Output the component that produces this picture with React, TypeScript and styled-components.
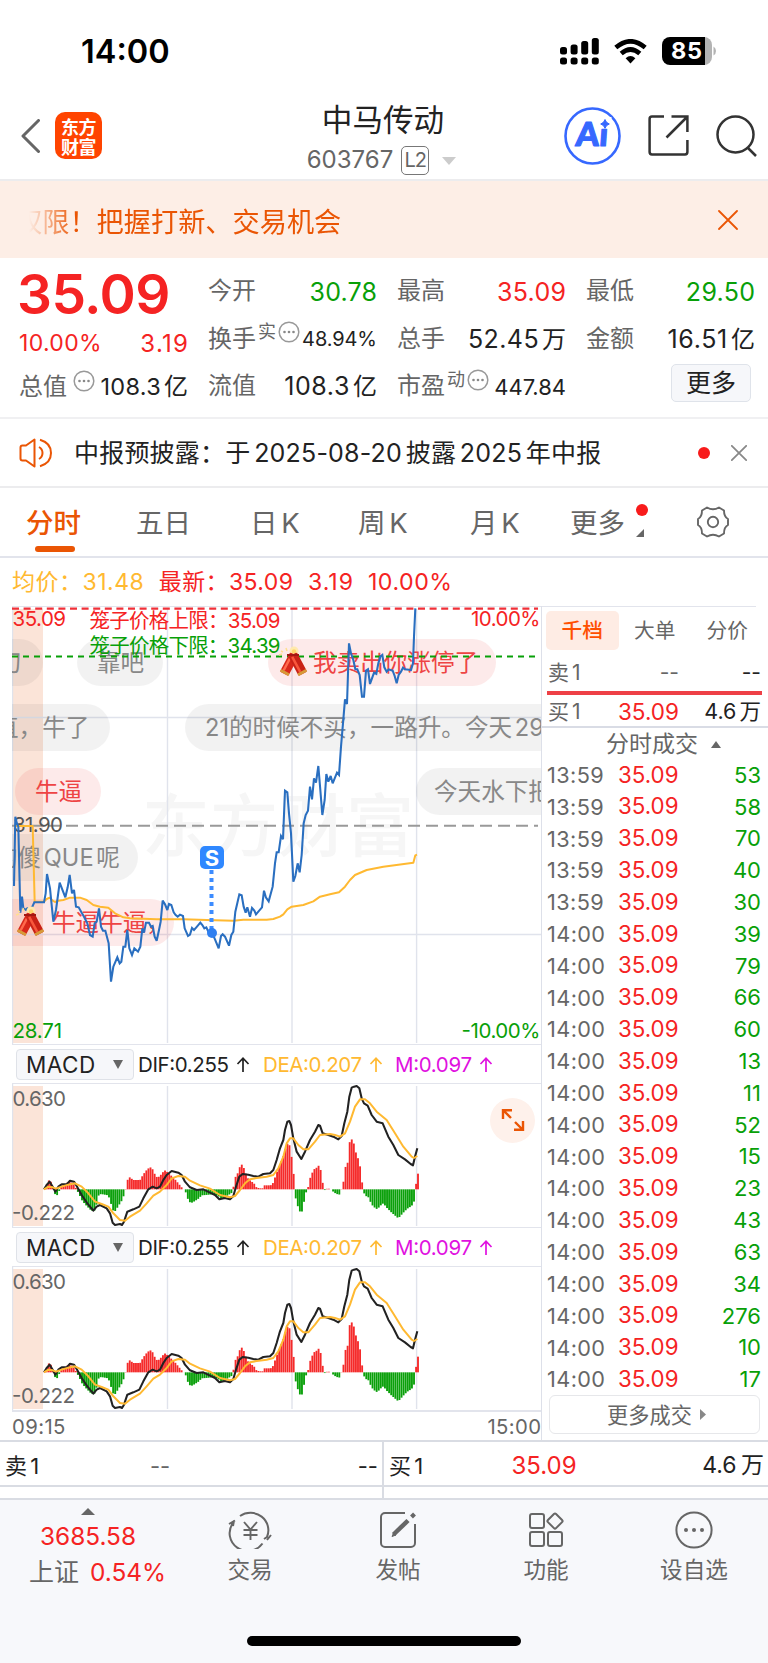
import React from 'react';
import styled, { createGlobalStyle } from 'styled-components';

const C = {
  red: '#f52323',
  green: '#08a008',
  orange: '#ea5504',
  gray: '#666',
  dark: '#222',
  line: '#e2e4ec',
  amber: '#ffb931',
  blue: '#2a6fc0',
  magenta: '#e011e0',
};
const FONT = 'Inter, "Noto Sans CJK SC", "Liberation Sans", sans-serif';

const Global = createGlobalStyle`
  * { box-sizing: border-box; }
  body { margin: 0; background: #fff; font-family: ${FONT}; color: ${C.dark}; }
  svg { display: block; flex: none; }
`;

const Screen = styled.div`
  width: 768px; height: 1663px; overflow: hidden; display: flex; flex-direction: column; background: #fff;
`;

/* run of text: size, colour, weight, tracking, word spacing */
const T = styled.span<{ $s?: number; $c?: string; $w?: number; $ls?: number; $ws?: number }>`
  font-size: ${p => p.$s ?? 25}px;
  color: ${p => p.$c ?? C.dark};
  font-weight: ${p => p.$w ?? 400};
  letter-spacing: ${p => p.$ls ?? 0}px;
  margin-right: ${p => -(p.$ls ?? 0)}px;
  word-spacing: ${p => p.$ws ?? 0}px;
  line-height: 1.2;
  white-space: pre;
`;
const Unit = styled.span`margin-left: 3px; font-size: 24px;`;

/* ---------- status bar ---------- */
const StatusBar = styled.header`
  height: 88px; flex: none; padding: 14px 52px 0 81px; display: flex; align-items: center; justify-content: space-between;
`;
const StatusIcons = styled.div`display: flex; align-items: center; gap: 15px;`;

/* ---------- title bar ---------- */
const NavBar = styled.nav`
  height: 93px; flex: none; border-bottom: 2px solid #ececee; display: grid; grid-template-columns: 200px 1fr 200px; align-items: center;
`;
const NavLeft = styled.div`display: flex; align-items: center; gap: 15px; padding: 4px 0 0 20px; height: 100%;`;
const Logo = styled.div`
  width: 47px; height: 47px; border-radius: 10px; background: #ff4400; color: #fff; display: flex; flex-direction: column;
  align-items: center; justify-content: center; font: 700 18px/20px "Noto Sans CJK SC", sans-serif; letter-spacing: -0.5px;
`;
const NavTitle = styled.div`display: flex; flex-direction: column; align-items: center; padding: 10px 2px 0 0;`;
const CodeLine = styled.div`display: flex; align-items: center; gap: 8px; margin-top: 8px;`;
const LevelTag = styled.span`
  width: 28px; height: 29px; border: 1.5px solid #777; border-radius: 5px; font-size: 20px; line-height: 27px; text-align: center;
  color: #666; letter-spacing: -1px;
`;
const NavRight = styled.div`display: flex; align-items: center; justify-content: flex-end; gap: 27px; padding: 4px 11px 0 0;`;

/* ---------- orange banner ---------- */
const Banner = styled.div`
  height: 77px; flex: none; background: #fdeee6; display: flex; align-items: center; padding: 0 30px 0 29px; justify-content: space-between;
`;
const BannerText = styled.div`
  height: 40px; display: flex; align-items: center; overflow: hidden; color: ${C.orange}; font-size: 27.2px; white-space: pre;
  span:first-child { margin-left: -14px; }
  mask-image: linear-gradient(90deg, transparent 0, #000 46px);
`;

/* ---------- quote ---------- */
const Quote = styled.section`
  height: 161px; flex: none; border-bottom: 2px solid #f0f0f2; padding: 10px 13px 0 19px; display: grid;
  grid-template-columns: repeat(4, 1fr); column-gap: 20px;
`;
const QCol = styled.div`display: flex; flex-direction: column;`;
const QRow = styled.div<{ $h?: number; $shift?: number }>`
  height: ${p => p.$h ?? 47.5}px; margin-left: ${p => p.$shift ?? 0}px; display: flex; align-items: center; justify-content: space-between;
`;
const QLabel = styled.span`
  display: flex; align-items: center; font-size: 24px; color: ${C.gray}; line-height: 1.2; white-space: nowrap; gap: 2px;
`;
const Sup = styled.span`font-size: 18px; line-height: 20px; margin-bottom: 14px;`;
const MoreBtn = styled.button`
  width: 80px; height: 38px; margin: 1px 4px 0 auto; border: 1.5px solid #dfe3ea; border-radius: 5px; background: #f6f7fa; padding: 0;
  font: 400 25px/33px ${FONT}; color: ${C.dark};
`;

/* ---------- news ---------- */
const News = styled.section`
  height: 69px; flex: none; border-bottom: 2px solid #ececee; display: flex; align-items: center; padding: 0 21px 0 19px;
`;
const NewsText = styled.div`flex: 1; margin-left: 21px; display: flex;`;
const Dot = styled.i<{ $r: number; $mr?: number }>`
  width: ${p => p.$r * 2}px; height: ${p => p.$r * 2}px; border-radius: 50%; background: #f81b1b; display: block; flex: none;
  margin-right: ${p => p.$mr ?? 0}px;
`;

/* ---------- tabs ---------- */
const Tabs = styled.nav`
  height: 70px; flex: none; border-bottom: 2px solid ${C.line}; display: grid; align-items: center; padding: 0 0 0 26px;
  grid-template-columns: 110px 114px 108px 112px 100px 127px 1fr;
`;
const Tab = styled.div<{ $on?: boolean }>`
  position: relative; height: 68px; display: flex; align-items: center; font-size: 27.5px; padding-bottom: 2px; white-space: pre;
  word-spacing: -4px; color: ${p => (p.$on ? C.orange : C.gray)}; font-weight: ${p => (p.$on ? 500 : 400)};
  &::after {
    content: ''; display: ${p => (p.$on ? 'block' : 'none')}; position: absolute; left: 9px; bottom: 4px; width: 40px; height: 6px;
    border-radius: 3px; background: ${C.orange};
  }
`;
const TabMark = styled.div`
  position: absolute; left: 66px; top: 16px; height: 33px; display: flex; flex-direction: column; justify-content: space-between;
`;

const Legend = styled.div`height: 48px; flex: none; padding: 2px 12px 0; display: flex; align-items: center; gap: 15px;`;

/* ---------- main area ---------- */
const Main = styled.main`height: 836px; flex: none; display: flex; border-bottom: 2px solid #d9dce3;`;
const Charts = styled.div`flex: none; width: 542px; padding-left: 12px; border-right: 1px solid #dde0e9; display: flex; flex-direction: column;`;
const PriceChart = styled.div`height: 438px; flex: none; position: relative; overflow: hidden; border-top: 1px solid ${C.line};`;
const Layer = styled.svg`position: absolute; left: 0; top: 0;`;
const Bubble = styled.div<{ $x: number; $y: number; $w: number; $red?: boolean; $pad: number }>`
  position: absolute; left: ${p => p.$x - 12}px; top: ${p => p.$y - 607}px; width: ${p => p.$w}px; height: 47px; border-radius: 24px;
  background: ${p => (p.$red ? 'rgba(240,50,50,.1)' : 'rgba(0,0,0,.05)')}; color: ${p => (p.$red ? '#ee4444' : '#888')};
  font-size: 23.6px; line-height: 47px; padding-left: ${p => p.$pad}px; white-space: nowrap; word-spacing: -4px;
`;
const IndicatorBar = styled.div<{ $h: number }>`
  height: ${p => p.$h}px; flex: none; border-top: 1.5px solid ${C.line}; border-bottom: 1.5px solid ${C.line};
  display: flex; align-items: center; padding: 1px 0 0 4px;
`;
const Picker = styled.button`
  width: 118px; height: 31px; border: 1.5px solid #dfe2e8; border-radius: 4px; background: #f6f7fa; padding: 0 10px 0 9px; margin-right: 4px;
  display: flex; align-items: center; justify-content: space-between; font: 400 22.5px/28px ${FONT}; letter-spacing: 0.5px; color: ${C.dark};
`;
const MacdBox = styled.div<{ $h: number }>`height: ${p => p.$h}px; flex: none; position: relative; overflow: hidden;`;
const Expand = styled.div`
  position: absolute; left: 478px; top: 13.5px; width: 45px; height: 45px; border-radius: 50%; background: #fef1eb;
  display: flex; align-items: center; justify-content: center;
`;
const TimeAxis = styled.div`
  flex: 1; border-top: 2px solid ${C.line}; display: flex; justify-content: space-between; align-items: center; padding-top: 2px;
`;

/* ---------- order panel ---------- */
const Side = styled.aside`width: 226px; flex: none; display: flex; flex-direction: column;`;
const SideTabs = styled.div`height: 48px; border-top: 1px solid ${C.line}; margin-right: 12px; display: flex; padding: 4px 0 0 4px; flex: none;`;
const SideTab = styled.div<{ $on?: boolean }>`
  width: 72.5px; height: 39px; border-radius: 5px; font-size: 20.7px; line-height: 39px; text-align: center; flex: none;
  color: ${p => (p.$on ? '#ff5000' : C.gray)}; background: ${p => (p.$on ? '#feece4' : 'transparent')}; font-weight: ${p => (p.$on ? 500 : 400)};
`;
const Level = styled.div<{ $h: number; $pt?: number }>`
  height: ${p => p.$h}px; flex: none; display: grid; grid-template-columns: 50px 81px 1fr; align-items: center; padding: ${p => p.$pt ?? 0}px 7px 0 6px;
  > :nth-child(2), > :nth-child(3) { text-align: right; }
`;
const RedBar = styled.div`height: 4px; margin: 0 6px 0 5px; background: #ee4046; flex: none;`;
const DealTitle = styled.div`
  height: 33px; flex: none; border-top: 2px solid #d9dce5; display: flex; align-items: center; justify-content: center; gap: 13px; padding: 2px 0 0 17px;
`;
const Deals = styled.div`display: flex; flex-direction: column; flex: none;`;
const Deal = styled.div`
  height: 31.82px; display: grid; grid-template-columns: 71px 80px 1fr; align-items: center; padding: 0 7px 0 5px;
  > :last-child { text-align: right; }
`;
const MoreDeals = styled.button`
  height: 39px; margin: 0 8px 0 7px; border: 1.5px solid #e6e7ea; border-radius: 6px; background: #fff; display: flex; align-items: center;
  justify-content: center; gap: 8px; font: 400 21.2px/34px ${FONT}; color: ${C.gray}; padding: 0 0 0 4px; flex: none;
`;

/* ---------- bottom quote strip ---------- */
const Strip = styled.div`height: 58px; flex: none; display: grid; grid-template-columns: 384px 384px; border-bottom: 2px solid #d9dce3;`;
const StripHalf = styled.div`
  border-right: 2px solid #d9dce3; &:last-child { border-right: 0; }
`;
const StripRow = styled.div`
  height: 45px; border-bottom: 2px solid #d9dce3; display: grid; grid-template-columns: 90px 130px 1fr; align-items: center; padding: 5px 4px 0 5px;
  > :nth-child(2) { text-align: center; }
  > :nth-child(3) { text-align: right; }
`;

const TabBar = styled.footer`flex: 1; background: #f7f8fb; display: flex; flex-direction: column;`;
const TabItems = styled.div`height: 136px; display: grid; grid-template-columns: 176px repeat(4, 148px);`;
const TabItem = styled.div`
  display: flex; flex-direction: column; align-items: center; padding-top: 11px; gap: 7px; font-size: 22.6px; line-height: 28px; color: #666;
`;
const IndexItem = styled.div`display: flex; flex-direction: column; align-items: center; padding-top: 8px; gap: 6.5px;`;
const IndexLine = styled.div`display: flex; align-items: center; gap: 11px; padding-left: 19px;`;
const HomeBar = styled.div`width: 274px; height: 10px; border-radius: 5px; background: #000; margin: 0 auto;`;

const More = () => (
  <svg width="22" height="22" viewBox="0 0 22 22">
    <circle cx="11" cy="11" r="9.8" fill="none" stroke="#999" strokeWidth="1.5" />
    {[6.5, 11, 15.5].map(x => <circle key={x} cx={x} cy="11" r="1.3" fill="#888" />)}
  </svg>
);
const Close = ({ s, c, w = 1.8 }: { s: number; c: string; w?: number }) => (
  <svg width={s} height={s} viewBox="0 0 20 20"><path d="M1 1L19 19M19 1L1 19" stroke={c} strokeWidth={w} strokeLinecap="round" /></svg>
);

/* Chart data is kept in thirds of a pixel. */
const PRICE = '42,858 46,650 50,668 55,680 61,938 66,890 70,925 78,930 82,925 88,928 97,920 103,907 132,907 137,880 141,822 150,865 160,965 168,930 179,848 196,892 203,862 209,825 216,880 222,870 228,920 236,922 246,940 252,950 262,970 270,1005 278,1010 284,970 290,965 297,925 303,980 309,992 316,992 326,1030 333,1145 340,1100 352,1072 359,1090 364,1085 370,1040 376,1040 382,990 388,1045 396,1065 403,1045 414,1055 421,1040 427,985 432,998 438,968 447,968 453,980 458,978 464,1010 470,1022 477,990 482,965 488,902 495,913 502,930 507,912 514,915 521,937 527,945 533,950 540,944 549,948 554,985 564,1008 570,1004 576,984 582,990 589,982 601,968 607,975 613,985 619,982 625,995 637,1000 645,1018 656,1045 663,1008 668,1003 675,1010 687,1037 694,1005 700,995 706,935 718,883 725,886 731,920 737,938 742,922 750,950 756,924 763,932 768,943 775,935 786,922 792,872 798,893 806,904 818,860 825,790 830,757 836,757 843,708 849,718 855,572 862,577 867,640 873,700 880,845 886,828 893,790 899,817 905,765 911,670 917,645 924,632 930,560 936,598 942,535 948,548 955,498 961,570 967,645 974,600 979,522 985,545 992,528 998,550 1011,518 1017,525 1023,440 1029,370 1035,298 1041,312 1047,130 1053,160 1060,180 1066,208 1072,208 1079,225 1086,290 1092,290 1098,212 1104,208 1110,252 1116,235 1122,218 1129,222 1135,190 1141,170 1147,165 1153,202 1160,215 1166,208 1172,210 1178,212 1184,228 1190,250 1196,225 1203,215 1209,203 1215,208 1227,209 1233,210 1239,190 1242,110 1246,25';
const AVG = '46,678 98,678 104,905 132,905 140,897 149,893 158,902 165,906 175,902 190,900 210,893 240,893 260,900 280,915 300,920 325,923 345,940 370,952 390,955 470,958 550,958 620,960 700,962 730,959 800,959 820,957 840,950 850,943 862,928 875,920 910,915 940,904 960,890 990,883 1017,877 1035,860 1050,840 1065,825 1100,810 1150,800 1240,788 1246,766 1251,764';
const DIF = '132,448 140,435 149,425 158,440 166,455 175,440 185,433 200,433 210,422 222,425 230,438 245,465 262,490 280,512 290,500 300,495 320,505 330,520 338,548 345,555 360,552 366,555 372,545 382,515 400,508 418,500 430,475 445,448 458,440 470,445 480,440 490,420 500,405 515,393 535,398 545,405 555,425 570,442 590,450 610,448 630,458 645,465 658,478 675,474 690,478 700,468 708,440 718,410 728,402 745,404 760,408 775,410 790,402 810,400 820,390 830,360 840,325 850,300 855,270 862,245 868,243 873,255 880,295 890,335 904,357 915,335 930,300 945,275 955,255 960,257 968,280 985,285 1000,290 1015,298 1025,288 1033,250 1042,215 1048,170 1055,143 1062,140 1070,138 1078,145 1085,175 1092,190 1103,197 1115,225 1130,245 1148,250 1165,290 1180,315 1195,345 1215,358 1232,372 1239,376 1245,350 1252,325';
const DEA = '132,448 145,440 158,442 168,446 185,440 205,434 225,430 245,440 265,460 285,485 305,492 325,500 340,520 360,540 375,542 390,530 420,512 440,490 460,467 480,455 500,435 515,415 535,408 555,410 570,422 600,436 630,446 660,465 690,472 705,468 720,450 735,430 750,418 770,414 800,410 820,405 835,385 850,350 860,310 870,295 880,295 895,315 910,328 925,328 945,305 960,285 990,282 1005,285 1020,290 1035,280 1050,245 1065,200 1080,178 1095,178 1110,190 1130,215 1160,240 1185,280 1210,320 1235,350 1242,354 1252,348';
const HIST: number[][] = [[132, 0], [137, 5], [143, 22], [149, 30], [155, 18], [160, 0], [163, -10], [169, -22], [175, -10], [181, 2], [185, 12], [197, 14], [205, 24], [210, 24], [220, 16], [226, 8], [229, 0], [235, -10], [247, -35], [260, -50], [275, -65], [283, -65], [290, -45], [296, -18], [303, -14], [325, -18], [332, -40], [340, -65], [346, -65], [355, -50], [368, -30], [375, -5], [378, 5], [385, 38], [391, 35], [400, 28], [420, 28], [430, 45], [440, 58], [450, 67], [458, 60], [466, 42], [472, 35], [480, 40], [487, 50], [497, 58], [503, 50], [515, 40], [525, 30], [535, 18], [545, 6], [551, 0], [556, -5], [564, -30], [572, -42], [585, -35], [597, -27], [605, -18], [640, -15], [655, -20], [665, -28], [680, -20], [694, -12], [700, 5], [705, 35], [712, 45], [718, 65], [727, 76], [735, 55], [742, 35], [750, 27], [762, 18], [770, 5], [787, 2], [793, 12], [812, 12], [820, 20], [828, 45], [836, 65], [850, 100], [860, 135], [867, 140], [873, 110], [880, 60], [884, 5], [888, -35], [895, -55], [902, -72], [907, -65], [912, -38], [918, -10], [925, 8], [932, 40], [942, 60], [950, 65], [957, 72], [963, 55], [968, 20], [972, 5], [975, -4], [983, 4], [990, 0], [996, 0], [1000, -8], [1010, -14], [1020, -16], [1024, 0], [1031, 25], [1037, 70], [1043, 80], [1048, 140], [1055, 150], [1060, 145], [1066, 115], [1072, 100], [1078, 80], [1083, 55], [1087, 15], [1091, -10], [1100, -22], [1108, -25], [1112, -40], [1120, -52], [1132, -60], [1140, -50], [1150, -42], [1160, -55], [1175, -70], [1195, -87], [1210, -70], [1222, -58], [1235, -50], [1243, -35], [1248, 15], [1254, 47]];

const bars: { x: number; v: number }[] = [];
for (let n = 0; n <= 180; n++) {
  const x = Math.min(134 + n * 6.225, 1254);
  const i = Math.max(1, HIST.findIndex(p => p[0] >= x));
  const a = HIST[i - 1];
  const b = HIST[i];
  bars.push({ x, v: a[1] + ((b[1] - a[1]) * (x - a[0])) / (b[0] - a[0]) });
}

const Firecracker = ({ x, y }: { x: number; y: number }) => (
  <g transform={`translate(${x} ${y})`}>
    <path d="M4 4l2 1M9 1l1 3M2 8l3-1" stroke="#ffdf90" strokeWidth="1.5" />
    <circle cx="17" cy="4" r="4.5" fill="#ffe9ae" />
    <circle cx="17" cy="4.5" r="2.2" fill="#ffd66a" />
    <g transform="rotate(28 12 17)">
      <rect x="7.5" y="6" width="9.5" height="22" rx="1.5" fill="#d8281b" />
      <rect x="9" y="8" width="2.5" height="17" fill="#ff6a4d" />
      <rect x="7.5" y="25" width="9.5" height="3" fill="#d79a38" />
    </g>
    <g transform="rotate(-28 21 17)">
      <rect x="16" y="6" width="9.5" height="22" rx="1.5" fill="#c92216" />
      <rect x="18" y="8" width="2.5" height="17" fill="#f8573c" />
      <rect x="16" y="25" width="9.5" height="3" fill="#d79a38" />
    </g>
    <path d="M10 8l12 0" stroke="#a31812" strokeWidth="2" />
  </g>
);

const Label = ({ x, y, c, w, s = 20.5, children }: { x: number; y: number; c: string; w?: number; s?: number; children: string }) => (
  <text x={x} y={y} fill={c} fontSize={s} textLength={w} lengthAdjust="spacing" fontFamily={FONT}>{children}</text>
);

const Price = () => (
  <PriceChart>
    <Layer width="529" height="438" viewBox="12 607 529 438">
      <rect x="12" y="609" width="31" height="434" fill="#fbe4d8" />
      <text x="142" y="851" fontSize="68" fontWeight="500" fill="#f6f6f6" textLength="272" fontFamily='"Noto Sans CJK SC",sans-serif'>东方财富</text>
      <path d="M12.5 607V1044M167.5 609V1043M292 609V1043M416.6 609V1043M12 717.5H541M12 934.5H541" stroke="#e0e3ec" strokeWidth="1.4" fill="none" />
    </Layer>
    <Bubble $x={-40} $y={638.5} $w={83} $pad={38}>刀</Bubble>
    <Bubble $x={77} $y={638.5} $w={86} $pad={20}>靠吧</Bubble>
    <Bubble $x={268} $y={638.5} $w={228} $pad={45} $red>我卖出你涨停了</Bubble>
    <Bubble $x={-60} $y={703.5} $w={170} $pad={55}>直，牛了</Bubble>
    <Bubble $x={185} $y={703.5} $w={420} $pad={20}>21的时候不买，一路升。今天 29</Bubble>
    <Bubble $x={15} $y={768} $w={86} $pad={20} $red>牛逼</Bubble>
    <Bubble $x={416} $y={768} $w={200} $pad={18}>今天水下把</Bubble>
    <Bubble $x={-40} $y={833.5} $w={178} $pad={34}>的傻 QUE 呢</Bubble>
    <Bubble $x={-10} $y={898.5} $w={184} $pad={62} $red>牛逼牛逼，</Bubble>
    <Layer width="529" height="438" viewBox="12 607 529 438">
      <path d="M12 608.6H538" stroke="#f03038" strokeWidth="2.2" strokeDasharray="7 4.6" />
      <path d="M12 656.5H538" stroke="#08a008" strokeWidth="1.8" strokeDasharray="6 5" />
      <path d="M12 825.8H538" stroke="#999" strokeWidth="2" strokeDasharray="12 6" />
      <Label x={13} y={832} c="#555" w={50}>31.90</Label>
      <g transform="translate(0 600) scale(.33333)" fill="none" strokeLinejoin="round">
        <polyline points={AVG} stroke={C.amber} strokeWidth="6" />
        <polyline points={PRICE} stroke={C.blue} strokeWidth="6.2" strokeLinejoin="miter" strokeMiterlimit="3" />
      </g>
      <Label x={12.5} y={626} c={C.red} w={53.5}>35.09</Label>
      <Label x={89.5} y={628} c={C.red} w={191}>笼子价格上限：35.09</Label>
      <Label x={89.5} y={652.5} c={C.green} w={191}>笼子价格下限：34.39</Label>
      <Label x={471} y={626} c={C.red} w={69.5}>10.00%</Label>
      <Label x={12.5} y={1038} c={C.green} w={49.5}>28.71</Label>
      <Label x={461.5} y={1038} c={C.green} w={79}>-10.00%</Label>
      <Firecracker x={277} y={647} />
      <Firecracker x={14} y={907} />
      <path d="M211.5 870V932" stroke="#3c8cff" strokeWidth="4" strokeDasharray="4 4" />
      <circle cx="212" cy="933" r="5" fill="#2f7ff0" />
      <rect x="200" y="846" width="24" height="23" rx="5" fill="#2f88ff" />
      <text x="212" y="865.5" fontSize="22" fontWeight="700" fill="#fff" textAnchor="middle" fontFamily={FONT}>S</text>
    </Layer>
  </PriceChart>
);

const Macd = ({ h, expand }: { h: number; expand?: boolean }) => (
  <MacdBox $h={h}>
    <Layer width="529" height={h} viewBox={`12 1084 529 ${h}`}>
      <rect x="12" y="1086" width="31" height="140" fill="#fbe4d8" />
      <path d="M12.5 1084V1227M167.5 1086V1226M292 1086V1226M416.6 1086V1226" stroke="#e0e3ec" strokeWidth="1.4" />
      <g transform="translate(0 1040) scale(.33333)" fill="none" strokeLinejoin="round">
        {bars.map((b, i) => (
          <rect key={i} x={b.x - 2.8} y={b.v > 0 ? 448 - b.v : 448} width="5.6" height={Math.abs(b.v)} fill={b.v > 0 ? '#f52a2a' : '#0aa00a'} />
        ))}
        <polyline points={DIF} stroke="#222" strokeWidth="6.2" />
        <polyline points={DEA} stroke={C.amber} strokeWidth="6" />
      </g>
      <Label x={12.5} y={1105.5} c={C.gray} w={53.5}>0.630</Label>
      <Label x={12} y={1219.5} c={C.gray} w={63}>-0.222</Label>
    </Layer>
    {expand && (
      <Expand>
        <svg width="24" height="24" viewBox="0 0 24 24" fill="none" stroke={C.orange} strokeWidth="2.4">
          <path d="M2 11V2.2H11M2.5 2.5L10 10M14 14L21.5 21.5M22 13V21.8H13" />
        </svg>
      </Expand>
    )}
  </MacdBox>
);

const Indicator = ({ h }: { h: number }) => (
  <IndicatorBar $h={h}>
    <Picker>MACD<svg width="10" height="9" viewBox="0 0 10 9"><path d="M0 0H10L5 9Z" fill="#666" /></svg></Picker>
    <svg width="370" height="30" viewBox="0 0 370 30">
      <Label x={0} y={22} c={C.dark} w={91}>DIF:0.255</Label>
      <Label x={125} y={22} c={C.amber} w={99}>DEA:0.207</Label>
      <Label x={257} y={22} c={C.magenta} w={77}>M:0.097</Label>
      {([[105, C.dark], [238, C.amber], [348, C.magenta]] as [number, string][]).map(([x, c]) => (
        <path key={x} d={`M${x} 22V8.5M${x - 5.5} 14L${x} 8.2L${x + 5.5} 14`} stroke={c} strokeWidth="1.7" fill="none" />
      ))}
    </svg>
  </IndicatorBar>
);

const deals: [string, string][] = [
  ['13:59', '53'], ['13:59', '58'], ['13:59', '70'], ['13:59', '40'], ['13:59', '30'], ['14:00', '39'], ['14:00', '79'],
  ['14:00', '66'], ['14:00', '60'], ['14:00', '13'], ['14:00', '11'], ['14:00', '52'], ['14:00', '15'], ['14:00', '23'],
  ['14:00', '43'], ['14:00', '63'], ['14:00', '34'], ['14:00', '276'], ['14:00', '10'], ['14:00', '17'],
];

export default function App() {
  return (
    <Screen>
      <Global />
      <StatusBar>
        <T $s={32.5} $w={600} $c="#000">14:00</T>
        <StatusIcons>
          <svg width="39" height="27" viewBox="0 0 39 27">
            {[0, 1, 2, 3].map(i => (
              <g key={i}>
                <rect x={i * 10.6} y={[9, 6.5, 3, 0][i]} width="7" height={[7.5, 10, 13.5, 16.5][i]} rx="2.5" />
                <rect x={i * 10.6} y="19.5" width="7" height="7" rx="2.5" />
              </g>
            ))}
          </svg>
          <svg width="33" height="25" viewBox="0 0 33 25" fill="none" stroke="#000" strokeWidth="4.6">
            <path d="M1.8 8.6Q16.5 -4 31.2 8.6M7.2 14.6Q16.5 6.4 25.8 14.6" />
            <path d="M11.6 19.2Q16.5 14.8 21.4 19.2L16.5 24.5Z" fill="#000" stroke="none" />
          </svg>
          <svg width="54" height="28" viewBox="0 0 54 28">
            <path d="M41 0h1a8 8 0 0 1 8 8v12a8 8 0 0 1-8 8h-1Z" fill="#b3b3b3" />
            <path d="M8 0H43V28H8a8 8 0 0 1-8-8V8a8 8 0 0 1 8-8Z" />
            <path d="M51.5 9.5q2.5 1.5 2.5 4.5t-2.5 4.5Z" fill="#b3b3b3" />
            <text x="24.5" y="22.3" fontSize="23.5" fontWeight="700" fill="#fff" textAnchor="middle" fontFamily={FONT} textLength="31">85</text>
          </svg>
        </StatusIcons>
      </StatusBar>

      <NavBar>
        <NavLeft>
          <svg width="20" height="34" viewBox="0 0 20 34"><path d="M18.5 1.5L3 17L18.5 32.5" fill="none" stroke="#666" strokeWidth="3" strokeLinecap="round" strokeLinejoin="round" /></svg>
          <Logo><span>东方</span><span>财富</span></Logo>
        </NavLeft>
        <NavTitle>
          <T $s={30.6}>中马传动</T>
          <CodeLine>
            <T $s={24} $c="#666">603767</T>
            <LevelTag>L2</LevelTag>
            <svg width="22" height="8" viewBox="-5 0 22 8"><path d="M0 0H14L7 8Z" fill="#ccc" /></svg>
          </CodeLine>
        </NavTitle>
        <NavRight>
          <svg width="57" height="58" viewBox="0 0 57 58">
            <ellipse cx="28.5" cy="29" rx="27" ry="27.5" fill="none" stroke="#3668ff" strokeWidth="2.6" />
            <g transform="skewX(-4) translate(3 0)" fontSize="33" fontWeight="900" fill="#3668ff" stroke="#3668ff" strokeWidth="1.2" strokeLinejoin="round" fontFamily="Lato, Inter, sans-serif">
              <text x="11" y="39.5" textLength="32">Ai</text>
            </g>
            <rect x="33.5" y="10" width="14" height="11.5" fill="#fff" />
            <path d="M41 12.5Q42 16 45.3 17Q42 18 41 21.3Q40 18 36.7 17Q40 16 41 12.5Z" fill="#3668ff" stroke="#3668ff" strokeWidth="1" />
          </svg>
          <svg width="41" height="41" viewBox="0 0 41 41" fill="none" stroke="#333" strokeWidth="2.5">
            <path d="M16 1.6H4a2.4 2.4 0 0 0-2.4 2.4V37a2.4 2.4 0 0 0 2.4 2.4H37a2.4 2.4 0 0 0 2.4-2.4V25M23.5 1.6H39.4V17M39 2L18.5 22.5" />
          </svg>
          <svg width="41" height="42" viewBox="0 0 41 42" fill="none" stroke="#333" strokeWidth="2.5">
            <circle cx="19.5" cy="19.5" r="18" /><path d="M32 33L40 41" />
          </svg>
        </NavRight>
      </NavBar>

      <Banner>
        <BannerText><span>权</span>限！把握打新、交易机会</BannerText>
        <Close s={20} c={C.orange} />
      </Banner>

      <Quote>
        <QCol>
          <QRow $h={51} $shift={-2}><T $s={55} $c={C.red} $w={600} $ls={-0.6}>35.09</T></QRow>
          <QRow $h={50}><T $s={23} $c={C.red} $ls={0.35}>10.00%</T><T $s={24} $c={C.red} $ls={1.3}>3.19</T></QRow>
          <QRow $h={37}><QLabel>总值</QLabel><Sup><More /></Sup><T $s={23.5} $ls={0.3}>108.3<Unit>亿</Unit></T></QRow>
        </QCol>
        <QCol>
          <QRow><QLabel>今开</QLabel><T $c={C.green} $ls={0.2}>30.78</T></QRow>
          <QRow><QLabel>换手<Sup>实</Sup><Sup><More /></Sup></QLabel><T $s={20} $ls={-0.1}>48.94%</T></QRow>
          <QRow><QLabel>流值</QLabel><T $ls={0.6}>108.3<Unit>亿</Unit></T></QRow>
        </QCol>
        <QCol>
          <QRow><QLabel>最高</QLabel><T $c={C.red} $ls={0.3}>35.09</T></QRow>
          <QRow><QLabel>总手</QLabel><T $ls={0.4}>52.45<Unit>万</Unit></T></QRow>
          <QRow><QLabel>市盈<Sup>动</Sup><Sup><More /></Sup></QLabel><T $s={22}>447.84</T></QRow>
        </QCol>
        <QCol>
          <QRow><QLabel>最低</QLabel><T $c={C.green} $ls={0.3}>29.50</T></QRow>
          <QRow><QLabel>金额</QLabel><T $ls={0.7}>16.51<Unit>亿</Unit></T></QRow>
          <MoreBtn>更多</MoreBtn>
        </QCol>
      </Quote>

      <News>
        <svg width="34" height="30" viewBox="0 0 34 30" fill="none" stroke={C.orange} strokeWidth="2" strokeLinejoin="round">
          <path d="M1.5 9.5Q1.5 7.5 3.5 7.5H7L15.5 1.5V28.5L7 22.5H3.5Q1.5 22.5 1.5 20.5Z" />
          <path d="M20 9Q23.5 11 23.5 15Q23.5 19 20 21M21 1.8Q32 5 32 15Q32 25 21 28.2" />
        </svg>
        <NewsText><T $s={25} $ls={0.2} $ws={-3.5}>中报预披露：于 2025-08-20 披露 2025 年中报</T></NewsText>
        <Dot $r={6} $mr={21} />
        <Close s={16} c="#888" w={2.2} />
      </News>

      <Tabs>
        <Tab $on>分时</Tab><Tab>五日</Tab><Tab>日 K</Tab><Tab>周 K</Tab><Tab>月 K</Tab>
        <Tab>更多<TabMark><Dot $r={6} /><svg width="8" height="8"><path d="M8 0V8H0Z" fill="#666" /></svg></TabMark></Tab>
        <svg width="32" height="32" viewBox="0 0 32 32" fill="none" stroke="#666" strokeWidth="1.9" strokeLinejoin="round">
          <path d="M10 1.5Q16 5 22 1.5L27 4.5Q27 11 31 13V19Q27 21 27 27.5L22 30.5Q16 27 10 30.5L5 27.5Q5 21 1 19V13Q5 11 5 4.5Z" />
          <circle cx="16" cy="16" r="5.2" />
        </svg>
      </Tabs>

      <Legend>
        <T $s={23} $c={C.amber} $ls={0.5}>均价：31.48</T>
        <T $s={23} $c={C.red} $ls={0.4}>最新：35.09</T>
        <T $s={23} $c={C.red} $ls={1}>3.19</T>
        <T $s={23.2} $c={C.red} $ls={0.5}>10.00%</T>
      </Legend>

      <Main>
        <Charts>
          <Price />
          <Indicator h={40} />
          <Macd h={143} expand />
          <Indicator h={40} />
          <Macd h={143} />
          <TimeAxis><T $s={20.3} $c={C.gray} $ls={0.4}>09:15</T><T $s={20.3} $c={C.gray} $ls={0.4}>15:00</T></TimeAxis>
        </Charts>
        <Side>
          <SideTabs><SideTab $on>千档</SideTab><SideTab>大单</SideTab><SideTab>分价</SideTab></SideTabs>
          <Level $h={37}><T $s={21} $c={C.gray} $ws={-3}>卖 1</T><T $s={21} $c={C.gray}>--</T><T $s={21}>--</T></Level>
          <RedBar />
          <Level $h={31} $pt={2}><T $s={21} $c={C.gray} $ws={-3}>买 1</T><T $s={22.5} $c={C.red}>35.09</T><T $s={21.5} $ws={-3}>4.6 万</T></Level>
          <DealTitle><T $s={23} $c={C.gray}>分时成交</T><svg width="10" height="7"><path d="M5 0L10 7H0Z" fill="#666" /></svg></DealTitle>
          <Deals>
            {deals.map(([t, v], i) => (
              <Deal key={i}><T $s={21.7} $c={C.gray} $ls={0.4}>{t}</T><T $s={22.3} $c={C.red}>35.09</T><T $s={22} $c={C.green}>{v}</T></Deal>
            ))}
          </Deals>
          <MoreDeals>更多成交<svg width="6" height="11"><path d="M0 0L6 5.5L0 11Z" fill="#888" /></svg></MoreDeals>
        </Side>
      </Main>

      <Strip>
        <StripHalf><StripRow><T $s={22} $ws={-3}>卖 1</T><T $s={22} $c={C.gray}>--</T><T $s={22}>--</T></StripRow></StripHalf>
        <StripHalf><StripRow><T $s={22} $ws={-3}>买 1</T><T $s={24} $c={C.red}>35.09</T><T $s={23} $ws={-2}>4.6 万</T></StripRow></StripHalf>
      </Strip>

      <TabBar>
        <TabItems>
          <IndexItem>
            <svg width="14" height="7"><path d="M7 0L14 7H0Z" fill="#666" /></svg>
            <T $s={24.4} $c={C.red}>3685.58</T>
            <IndexLine><T $s={25} $c={C.gray}>上证</T><T $s={24.4} $c={C.red}>0.54%</T></IndexLine>
          </IndexItem>
          <TabItem>
            <svg width="44" height="38" viewBox="0 0 44 38" fill="none" stroke="#666" strokeWidth="2">
              <path d="M12 5A18 17.5 0 0 1 39 26M39 26L36 28M39 29L43 24M34.5 32.5A18 17.5 0 0 1 5 12M7 9.5L1 13M5 15L6 9.5" />
              <path d="M16 11L22.5 18.5L29 11M22.5 18.5V29M15.5 19H29.5M15.5 24H29.5" strokeWidth="1.9" />
            </svg>交易
          </TabItem>
          <TabItem>
            <svg width="38" height="38" viewBox="0 0 38 38" fill="none" stroke="#666" strokeWidth="2">
              <path d="M26 2H6A4 4 0 0 0 2 6V32A4 4 0 0 0 6 36H32A4 4 0 0 0 36 32V13" />
              <path d="M14.5 23.5L29 9.5" strokeWidth="4.5" /><path d="M32.5 6L35.5 3" strokeWidth="4" /><path d="M13 25.5L17 24L14.8 21.5Z" fill="#666" strokeWidth="1" />
            </svg>发帖
          </TabItem>
          <TabItem>
            <svg width="36" height="38" viewBox="0 0 36 38" fill="none" stroke="#666" strokeWidth="2">
              <rect x="2" y="3" width="14" height="14" rx="2" /><rect x="2" y="21" width="14" height="14" rx="2" /><rect x="20" y="21" width="14" height="14" rx="2" />
              <rect x="21.3" y="4.3" width="11.5" height="11.5" rx="1.5" transform="rotate(45 27 10)" />
            </svg>功能
          </TabItem>
          <TabItem>
            <svg width="38" height="38" viewBox="0 0 38 38"><circle cx="19" cy="19" r="17.6" fill="none" stroke="#666" strokeWidth="2" />{[11, 19, 27].map(x => <circle key={x} cx={x} cy="19" r="2" fill="#666" />)}</svg>设自选
          </TabItem>
        </TabItems>
        <HomeBar />
      </TabBar>
    </Screen>
  );
}
